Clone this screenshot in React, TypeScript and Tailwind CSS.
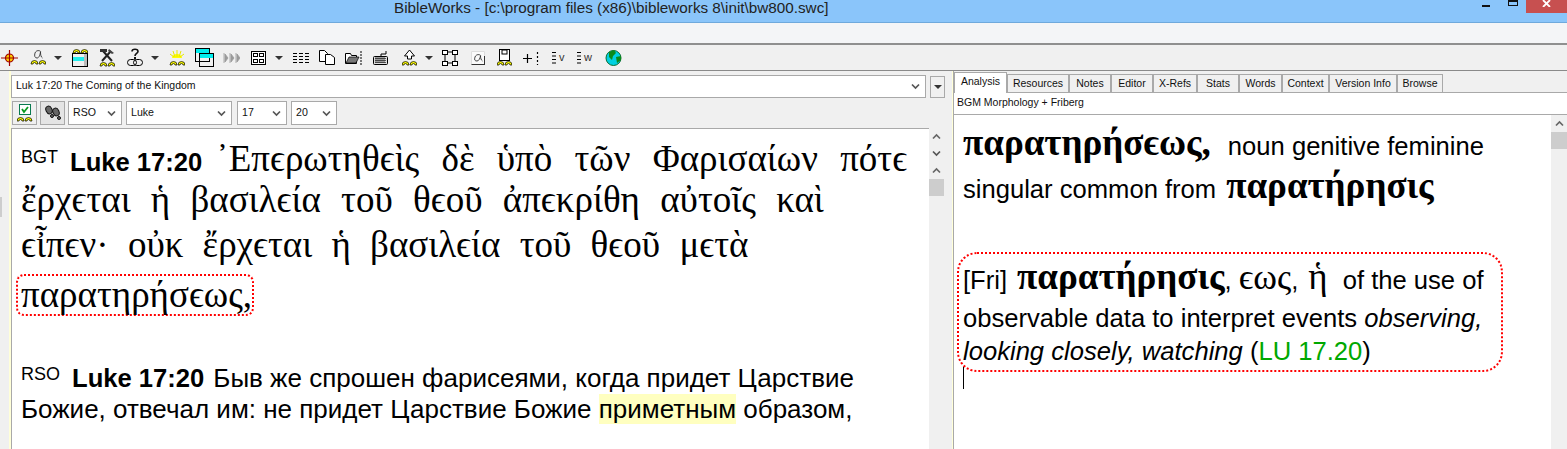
import type { ReactNode } from "react";

const serif = "[font-family:'Liberation_Serif','DejaVu_Serif',serif]";

function Arrow({ className = "" }: { className?: string }) {
  return <span className={`inline-block w-0 h-0 border-x-[4px] border-x-transparent border-t-[4px] border-t-[#333] ${className}`} />;
}

function Chevron() {
  return (
    <svg width="9" height="7" viewBox="0 0 9 7" className="shrink-0">
      <path d="M1 1.500 L4.500 5 L8 1.500" fill="none" stroke="#555" strokeWidth="1.700" />
    </svg>
  );
}

function ChevronUp() {
  return (
    <svg width="9" height="7" viewBox="0 0 9 7" className="shrink-0">
      <path d="M1 5.500L4.500 2 8 5.500" fill="none" stroke="#666" strokeWidth="1.700" />
    </svg>
  );
}

function Select({ label, width }: { label: string; width: string }) {
  return (
    <div className={`${width} h-[24px] bg-white border border-[#a9a9a9] flex items-center justify-between pl-[4px] pr-[5px] text-[10.600px] text-[#111]`}>
      <span>{label}</span>
      <Chevron />
    </div>
  );
}

// little yellow "feet" that sit under a lot of the toolbar icons
function Feet({ x = 1, y = 14 }: { x?: number; y?: number }) {
  return (
    <g>
      <path d={`M${x} ${y + 5} a3.500 3.500 0 0 1 7 0 h-2 a1.500 1.500 0 0 0 -3 0z`} fill="#ff0" stroke="#000" strokeWidth="0.700" />
      <path d={`M${x + 8} ${y + 5} a3.500 3.500 0 0 1 7 0 h-2 a1.500 1.500 0 0 0 -3 0z`} fill="#ff0" stroke="#000" strokeWidth="0.700" />
    </g>
  );
}

function Ico({ w = 18, children }: { w?: number; children: ReactNode }) {
  return (
    <svg width={w} height="20" viewBox={`0 0 ${w} 20`} className="shrink-0">
      {children}
    </svg>
  );
}

function Toolbar() {
  const line = { stroke: "#000", fill: "none", strokeWidth: 1 };
  return (
    <div className="h-[26px] bg-[#f0f0f0] border-b border-[#8a8a8a] flex items-center pl-[1px] shrink-0">
      <Ico w={17}>
        <circle cx="8.500" cy="10" r="4" fill="#ffd400" stroke="#a00000" strokeWidth="1.200" />
        <path d="M0 10h17M8.500 2v16" stroke="#a00000" strokeWidth="1.200" />
      </Ico>
      <div className="w-[12px]" />
      <Ico w={16}>
        <path d="M11 4c-1-2-5-2-6 1s0 5 2 5 3-3 3.500-6c0 3 .5 5 2 6" fill="none" stroke="#333" strokeWidth="0.900" />
        <Feet y={11} />
      </Ico>
      <Arrow className="ml-[8px] mr-[10px]" />
      <Ico w={16}>
        <Feet y={0} />
        <rect x="0.500" y="5.500" width="15" height="13" fill="#fff" {...line} />
        <rect x="1" y="9" width="11" height="4" fill="#2ee" />
        <rect x="12" y="6" width="3" height="12" fill="#bbb" />
      </Ico>
      <div className="w-[11px]" />
      <Ico w={16}>
        <path d="M4 3l9 10M12 3L3 13" stroke="#222" strokeWidth="2" />
        <rect x="1" y="1" width="7" height="3" fill="#333" />
        <path d="M10 1l5 4-2 1-4-3z" fill="#444" />
        <Feet y={13} />
      </Ico>
      <div className="w-[12px]" />
      <Ico w={16}>
        <path d="M5 3.500c0-3 6-3 6 0 0 2-3 2-3 4.500" fill="none" stroke="#111" strokeWidth="1.600" />
        <rect x="7" y="9" width="2" height="2" fill="#111" />
        <rect x="0.500" y="11.500" width="9" height="6" rx="3" fill="none" stroke="#000" />
        <rect x="6.500" y="11.500" width="9" height="6" rx="3" fill="none" stroke="#000" />
      </Ico>
      <Arrow className="ml-[8px] mr-[10px]" />
      <Ico w={16}>
        <path d="M3 10a5 4 0 0 1 10 0z" fill="#ff0" />
        <path d="M8 2v7M4 3l2 6M12 3l-2 6M1 6l4 3M15 6l-4 3" stroke="#e8e800" />
        <Feet y={12} />
      </Ico>
      <div className="w-[10px]" />
      <Ico w={19}>
        <rect x="0.500" y="0.500" width="14" height="13" fill="#fff" {...line} />
        <rect x="1" y="1" width="13" height="4" fill="#0ee" />
        <rect x="4.500" y="5.500" width="14" height="13" fill="#fff" {...line} />
        <rect x="5" y="6" width="13" height="4" fill="#0ee" />
      </Ico>
      <div className="w-[9px]" />
      <Ico w={17}>
        <path d="M1 5v10M5 10L2 6v8zM7 5v10M11 10L8 6v8zM13 5v10M17 10l-3-4v8z" fill="#9a9a9a" stroke="#9a9a9a" strokeWidth="0.800" />
      </Ico>
      <div className="w-[11px]" />
      <Ico w={15}>
        <rect x="0.500" y="3.500" width="14" height="13" fill="#fff" stroke="#000" />
        <rect x="2.500" y="5.500" width="4" height="3" fill="#fff" stroke="#000" />
        <rect x="8.500" y="5.500" width="4" height="3" fill="#fff" stroke="#000" />
        <rect x="2.500" y="11.500" width="4" height="3" fill="#fff" stroke="#000" />
        <rect x="8.500" y="11.500" width="4" height="3" fill="#fff" stroke="#000" />
      </Ico>
      <Arrow className="ml-[9px] mr-[10px]" />
      <Ico w={17}>
        <path d="M0 5.500h4M6 5.500h4M12 5.500h4M0 8.500h4M6 8.500h4M12 8.500h4M0 11.500h4M6 11.500h4M12 11.500h4M0 14.500h4M6 14.500h4M12 14.500h4" stroke="#000" />
      </Ico>
      <div className="w-[9px]" />
      <Ico w={16}>
        <path d="M0.500 2.500h5l3 3v8h-8z" fill="#fff" stroke="#000" />
        <path d="M6.500 6.500h5l4 3v7h-9z" fill="#fff" stroke="#000" />
      </Ico>
      <div className="w-[10px]" />
      <Ico w={18}>
        <path d="M0.500 5.500h5l1 2h5v8h-11z" fill="#fff" stroke="#000" />
        <path d="M1 15l3-6h10l-3 6z" fill="#777" stroke="#000" strokeWidth="0.700" />
        <path d="M15 4h2M15 7h2M15 10h2M15 13h2M15 16h2" stroke="#000" />
      </Ico>
      <div className="w-[10px]" />
      <Ico w={15}>
        <rect x="0.500" y="8.500" width="14" height="8" rx="1" fill="#ddd" stroke="#000" />
        <path d="M2 10.500h11M2 12.500h11M2 14.500h11M3 9v6M5 9v6M7 9v6M9 9v6M11 9v6" stroke="#222" strokeWidth="0.700" />
        <path d="M8 8V6h5V3" stroke="#000" fill="none" />
      </Ico>
      <div className="w-[14px]" />
      <Ico w={15}>
        <path d="M7.500 2l5 6h-3v3h-4V8h-3z" fill="#fff" stroke="#000" />
        <Feet y={12} x={0} />
      </Ico>
      <Arrow className="ml-[8px] mr-[9px]" />
      <Ico w={16}>
        <path d="M3 4h10M3 15h10M3 4v11M13 4v11" stroke="#000" />
        <rect x="0.500" y="2.500" width="5" height="4" fill="#fff" stroke="#000" />
        <rect x="10.500" y="2.500" width="5" height="4" fill="#fff" stroke="#000" />
        <rect x="0.500" y="13.500" width="5" height="4" fill="#fff" stroke="#000" />
        <rect x="10.500" y="13.500" width="5" height="4" fill="#fff" stroke="#000" />
      </Ico>
      <div className="w-[13px]" />
      <Ico w={14}>
        <rect x="0" y="3" width="14" height="14" fill="#fafafa" />
        <path d="M0.500 3.500h13M0.500 3.500v13M13.500 3.500v13" stroke="#ddd" />
        <path d="M0.500 16.500h13M13.500 8v9" stroke="#333" />
        <path d="M10 8c-1-2-5-2-6 1s0 4 2 4 3-3 3.500-5c0 2 .5 4 2 5" fill="none" stroke="#333" strokeWidth="0.900" />
      </Ico>
      <div className="w-[12px]" />
      <Ico w={15}>
        <rect x="2.500" y="1.500" width="10" height="11" fill="#fff" stroke="#000" />
        <rect x="5" y="2" width="5" height="4" fill="#fff" stroke="#000" />
        <Feet y={12} x={0} />
      </Ico>
      <div className="w-[11px]" />
      <Ico w={16}>
        <path d="M0 10.500h9M4.500 6v9M14.500 4v2M14.500 8v2M14.500 12v2M14.500 16v1" stroke="#000" strokeWidth="1.200" />
      </Ico>
      <div className="w-[12px]" />
      <div className="flex items-center w-[14px] h-[20px] text-[11px] leading-none text-[#333]">
        <svg width="6" height="14" viewBox="0 0 6 14"><path d="M1 1.500h4M1 5h4M1 8.500h4M1 12h4" stroke="#000" /></svg>
        <span className="ml-[2px]">v</span>
      </div>
      <div className="w-[11px]" />
      <div className="flex items-center w-[17px] h-[20px] text-[11px] leading-none text-[#333]">
        <svg width="6" height="14" viewBox="0 0 6 14"><path d="M1 1.500h4M1 5h4M1 8.500h4M1 12h4" stroke="#000" /></svg>
        <span className="ml-[2px]">w</span>
      </div>
      <div className="w-[12px]" />
      <Ico w={17}>
        <circle cx="8.500" cy="10" r="7.500" fill="#00d0e0" stroke="#0a6a30" />
        <path d="M4 4l5-2 2 3-3 3-1 4-3-3zM11 9l5-1 0 4-4 3z" fill="#0a8a1a" />
      </Ico>
    </div>
  );
}

function Tab({ label, w, active }: { label: string; w: string; active?: boolean }) {
  return active ? (
    <div className={`${w} h-[21px] bg-white border border-b-0 border-[#a9a9a9] flex items-center justify-center pb-[3px] relative z-10 -mb-px`}>{label}</div>
  ) : (
    <div className={`${w} h-[18px] bg-[#f0f0f0] border border-b-0 border-[#a9a9a9] flex items-center justify-center`}>{label}</div>
  );
}

export default function App() {
  return (
    <div className="w-[1567px] h-[449px] overflow-hidden bg-[#f0f0f0] flex flex-col [font-family:'Liberation_Sans',Arial,sans-serif]">
      {/* title bar */}
      <div className="h-[23px] bg-[#8ac5fa] border-b border-[#6fa9dc] flex items-start shrink-0">
        <div className="ml-[394px] text-[15.250px] leading-[16px] text-[#222] whitespace-nowrap">BibleWorks - [c:\program files (x86)\bibleworks 8\init\bw800.swc]</div>
        <div className="ml-auto flex items-start">
          <div className="w-[8px] h-[2px] bg-[#111] mt-[5px] mr-[18px]" />
          <div className="w-[10px] h-[6px] border border-[#111] border-t-2 mr-[8px]" />
          <div className="w-[41px] h-[13px] bg-[#c75050] flex items-start justify-center">
            <svg width="10" height="7" viewBox="0 0 10 7"><path d="M1 0l7 7M8 0L1 7" stroke="#fff" strokeWidth="1.800" /></svg>
          </div>
        </div>
      </div>
      {/* menu strip */}
      <div className="h-[22px] bg-[#f4f5f7] border-b-2 border-[#8f8f8f] shrink-0" />
      <Toolbar />
      <div className="flex-1 flex min-h-0">
        {/* left gutter */}
        <div className="w-[11px] bg-[#f0f0f0] shrink-0 flex justify-between">
          <div className="w-[2px] h-[20px] bg-[#cdcdcd] mt-[126px]" />
          <div className="w-[2px] bg-[#ffffd8]" />
        </div>
        {/* left pane */}
        <div className="w-[934px] shrink-0 flex flex-col pt-[4px]">
          <div className="flex items-center">
            <div className="w-[915px] h-[23px] bg-white border border-[#a9a9a9] flex items-center justify-between pl-[4px] pr-[5px] pb-[1px] text-[10.500px] text-[#111]">
              <span>Luk 17:20 The Coming of the Kingdom</span>
              <Chevron />
            </div>
            <div className="w-[15px] h-[22px] ml-[4px] border border-[#a9a9a9] flex items-center justify-center"><Arrow /></div>
          </div>
          <div className="flex items-center pl-[1px] mt-[3px]">
            <div className="w-[25px] h-[24px] border border-[#a9a9a9] flex justify-center items-center">
              <svg width="16" height="18" viewBox="0 0 16 18">
                <rect x="2.500" y="0.500" width="11" height="10" fill="#fff" stroke="#0a7a50" />
                <path d="M5 5l2 3 4-5" stroke="#0a9a20" strokeWidth="1.800" fill="none" />
                <Feet x={0} y={12} />
              </svg>
            </div>
            <div className="w-[25px] h-[24px] ml-[3px] border border-[#a9a9a9] bg-[#e4e4e4] flex justify-center items-center">
              <svg width="18" height="16" viewBox="0 0 18 16">
                <ellipse cx="5" cy="5" rx="3" ry="4" fill="#666" stroke="#111" transform="rotate(-25 5 5)" />
                <circle cx="8" cy="11" r="1.500" fill="#666" stroke="#111" />
                <ellipse cx="12" cy="7" rx="3" ry="4" fill="#666" stroke="#111" transform="rotate(-25 12 7)" />
                <circle cx="15" cy="13" r="1.500" fill="#666" stroke="#111" />
              </svg>
            </div>
            <div className="w-[3px]" />
            <Select label="RSO" width="w-[54px]" />
            <div className="w-[4px]" />
            <Select label="Luke" width="w-[106px]" />
            <div className="w-[5px]" />
            <Select label="17" width="w-[50px]" />
            <div className="w-[4px]" />
            <Select label="20" width="w-[46px]" />
          </div>
          <div className="flex-1 flex min-h-0 mt-[3px]">
            <div className="w-[918px] bg-white border-t border-l border-[#a9a9a9] pl-[9px] pt-[7px] overflow-hidden text-black">
              <div className={`${serif} text-[37px] leading-[45px] whitespace-nowrap`}>
                <div className="flex items-baseline h-[41px] [word-spacing:13px]">
                  <span className="text-[18px] -translate-y-[8px] [font-family:'Liberation_Sans']">BGT</span>
                  <span className="text-[25.600px] font-bold ml-[12px] mr-[14px] [word-spacing:0] [font-family:'Liberation_Sans']">Luke 17:20</span>
                  <span>᾿Επϵρωτηθϵὶς δὲ ὑπὸ τῶν Φαρισαίων πότϵ</span>
                </div>
                <div className="[word-spacing:11px]">ἔρχϵται ἡ βασιλϵία τοῦ θϵοῦ ἀπϵκρίθη αὐτοῖς καὶ</div>
                <div className="[word-spacing:10px]">ϵἶπϵν· οὐκ ἔρχϵται ἡ βασιλϵία τοῦ θϵοῦ μϵτὰ</div>
                <div className="-ml-[5px] pl-[3px] w-[238px] h-[42px] leading-[38px] mt-[7px] border-2 border-dotted border-[#f00] rounded-[8px]">παρατηρήσϵως,</div>
              </div>
              <div className="text-[26px] leading-[31px] mt-[47px] whitespace-nowrap">
                <div className="flex items-baseline h-[31px]">
                  <span className="text-[18px] -translate-y-[7px]">RSO</span>
                  <b className="ml-[12px] mr-[9px] text-[25.600px]">Luke 17:20</b>
                  <span>Быв же спрошен фарисеями, когда придет Царствие</span>
                </div>
                <div>Божие, отвечал им: не придет Царствие Божие <span className="bg-[#ffffc0]">приметным</span> образом,</div>
              </div>
            </div>
            {/* left scrollbar */}
            <div className="w-[15px] flex flex-col items-center shrink-0 pt-[5px]">
              <ChevronUp />
              <div className="h-[10px] shrink-0" />
              <Chevron />
              <div className="h-[10px] shrink-0" />
              <ChevronUp />
              <div className="w-full h-[17px] bg-[#cdcdcd] mt-[5px]" />
            </div>
          </div>
        </div>
        {/* splitter */}
        <div className="w-[9px] shrink-0 flex justify-end">
          <div className="w-px bg-[#ffffd8]" />
          <div className="w-px bg-[#a9a9a9]" />
        </div>
        {/* right pane */}
        <div className="flex-1 flex flex-col min-w-0 pt-[1px]">
          <div className="h-[21px] flex items-end text-[10.500px] text-[#111] border-b border-[#a9a9a9] shrink-0">
            <Tab label="Analysis" w="w-[53px]" active />
            <Tab label="Resources" w="w-[62px]" />
            <Tab label="Notes" w="w-[42px]" />
            <Tab label="Editor" w="w-[42px]" />
            <Tab label="X-Refs" w="w-[44px]" />
            <Tab label="Stats" w="w-[42px]" />
            <Tab label="Words" w="w-[43px]" />
            <Tab label="Context" w="w-[47px]" />
            <Tab label="Version Info" w="w-[68px]" />
            <Tab label="Browse" w="w-[46px]" />
          </div>
          <div className="h-[22px] bg-white border-b border-[#a9a9a9] pl-[3px] pb-[2px] flex items-center text-[10.500px] text-[#111] shrink-0">BGM Morphology + Friberg</div>
          <div className="flex-1 flex min-h-0">
            <div className="w-[597px] bg-white pl-[9px] pt-[6px] overflow-hidden text-black">
              <div className="text-[25.600px] leading-[43px] whitespace-nowrap">
                <div className="flex items-baseline h-[43px]">
                  <span className={`${serif} text-[37px] font-bold`}>παρατηρήσϵως,</span>
                  <span className="ml-[17px]">noun genitive feminine</span>
                </div>
                <div className="flex items-baseline h-[43px]">
                  <span>singular common from</span>
                  <span className={`${serif} text-[37px] font-bold ml-[10px]`}>παρατήρησις</span>
                </div>
              </div>
              <div className="-ml-[6px] pl-[4px] pt-[3px] mt-[45px] w-[546px] h-[120px] border-2 border-dotted border-[#f00] rounded-[20px] text-[25.600px] whitespace-nowrap">
                <div className="flex items-baseline h-[40px] leading-[40px]">
                  <span>[Fri]</span>
                  <span className={`${serif} text-[37px] font-bold ml-[10px]`}>παρατήρησις</span>
                  <span>,</span>
                  <span className={`${serif} text-[36px] ml-[7px]`}>ϵως</span>
                  <span>,</span>
                  <span className={`${serif} text-[37px] ml-[10px]`}>ἡ</span>
                  <span className="ml-[15px]">of the use of</span>
                </div>
                <div className="h-[33px] leading-[42px]">observable data to interpret events <i>observing,</i></div>
                <div className="h-[33px] leading-[42px]"><i>looking closely, watching</i> (<span className="text-[#00a800]">LU 17.20</span>)</div>
              </div>
              <div className="w-px h-[22px] bg-black -mt-[5px]" />
            </div>
            {/* right scrollbar */}
            <div className="flex-1 flex flex-col items-center pt-[5px]">
              <ChevronUp />
              <div className="w-full h-[17px] bg-[#cdcdcd] mt-[5px]" />
            </div>
          </div>
        </div>
      </div>
    </div>
  );
}
